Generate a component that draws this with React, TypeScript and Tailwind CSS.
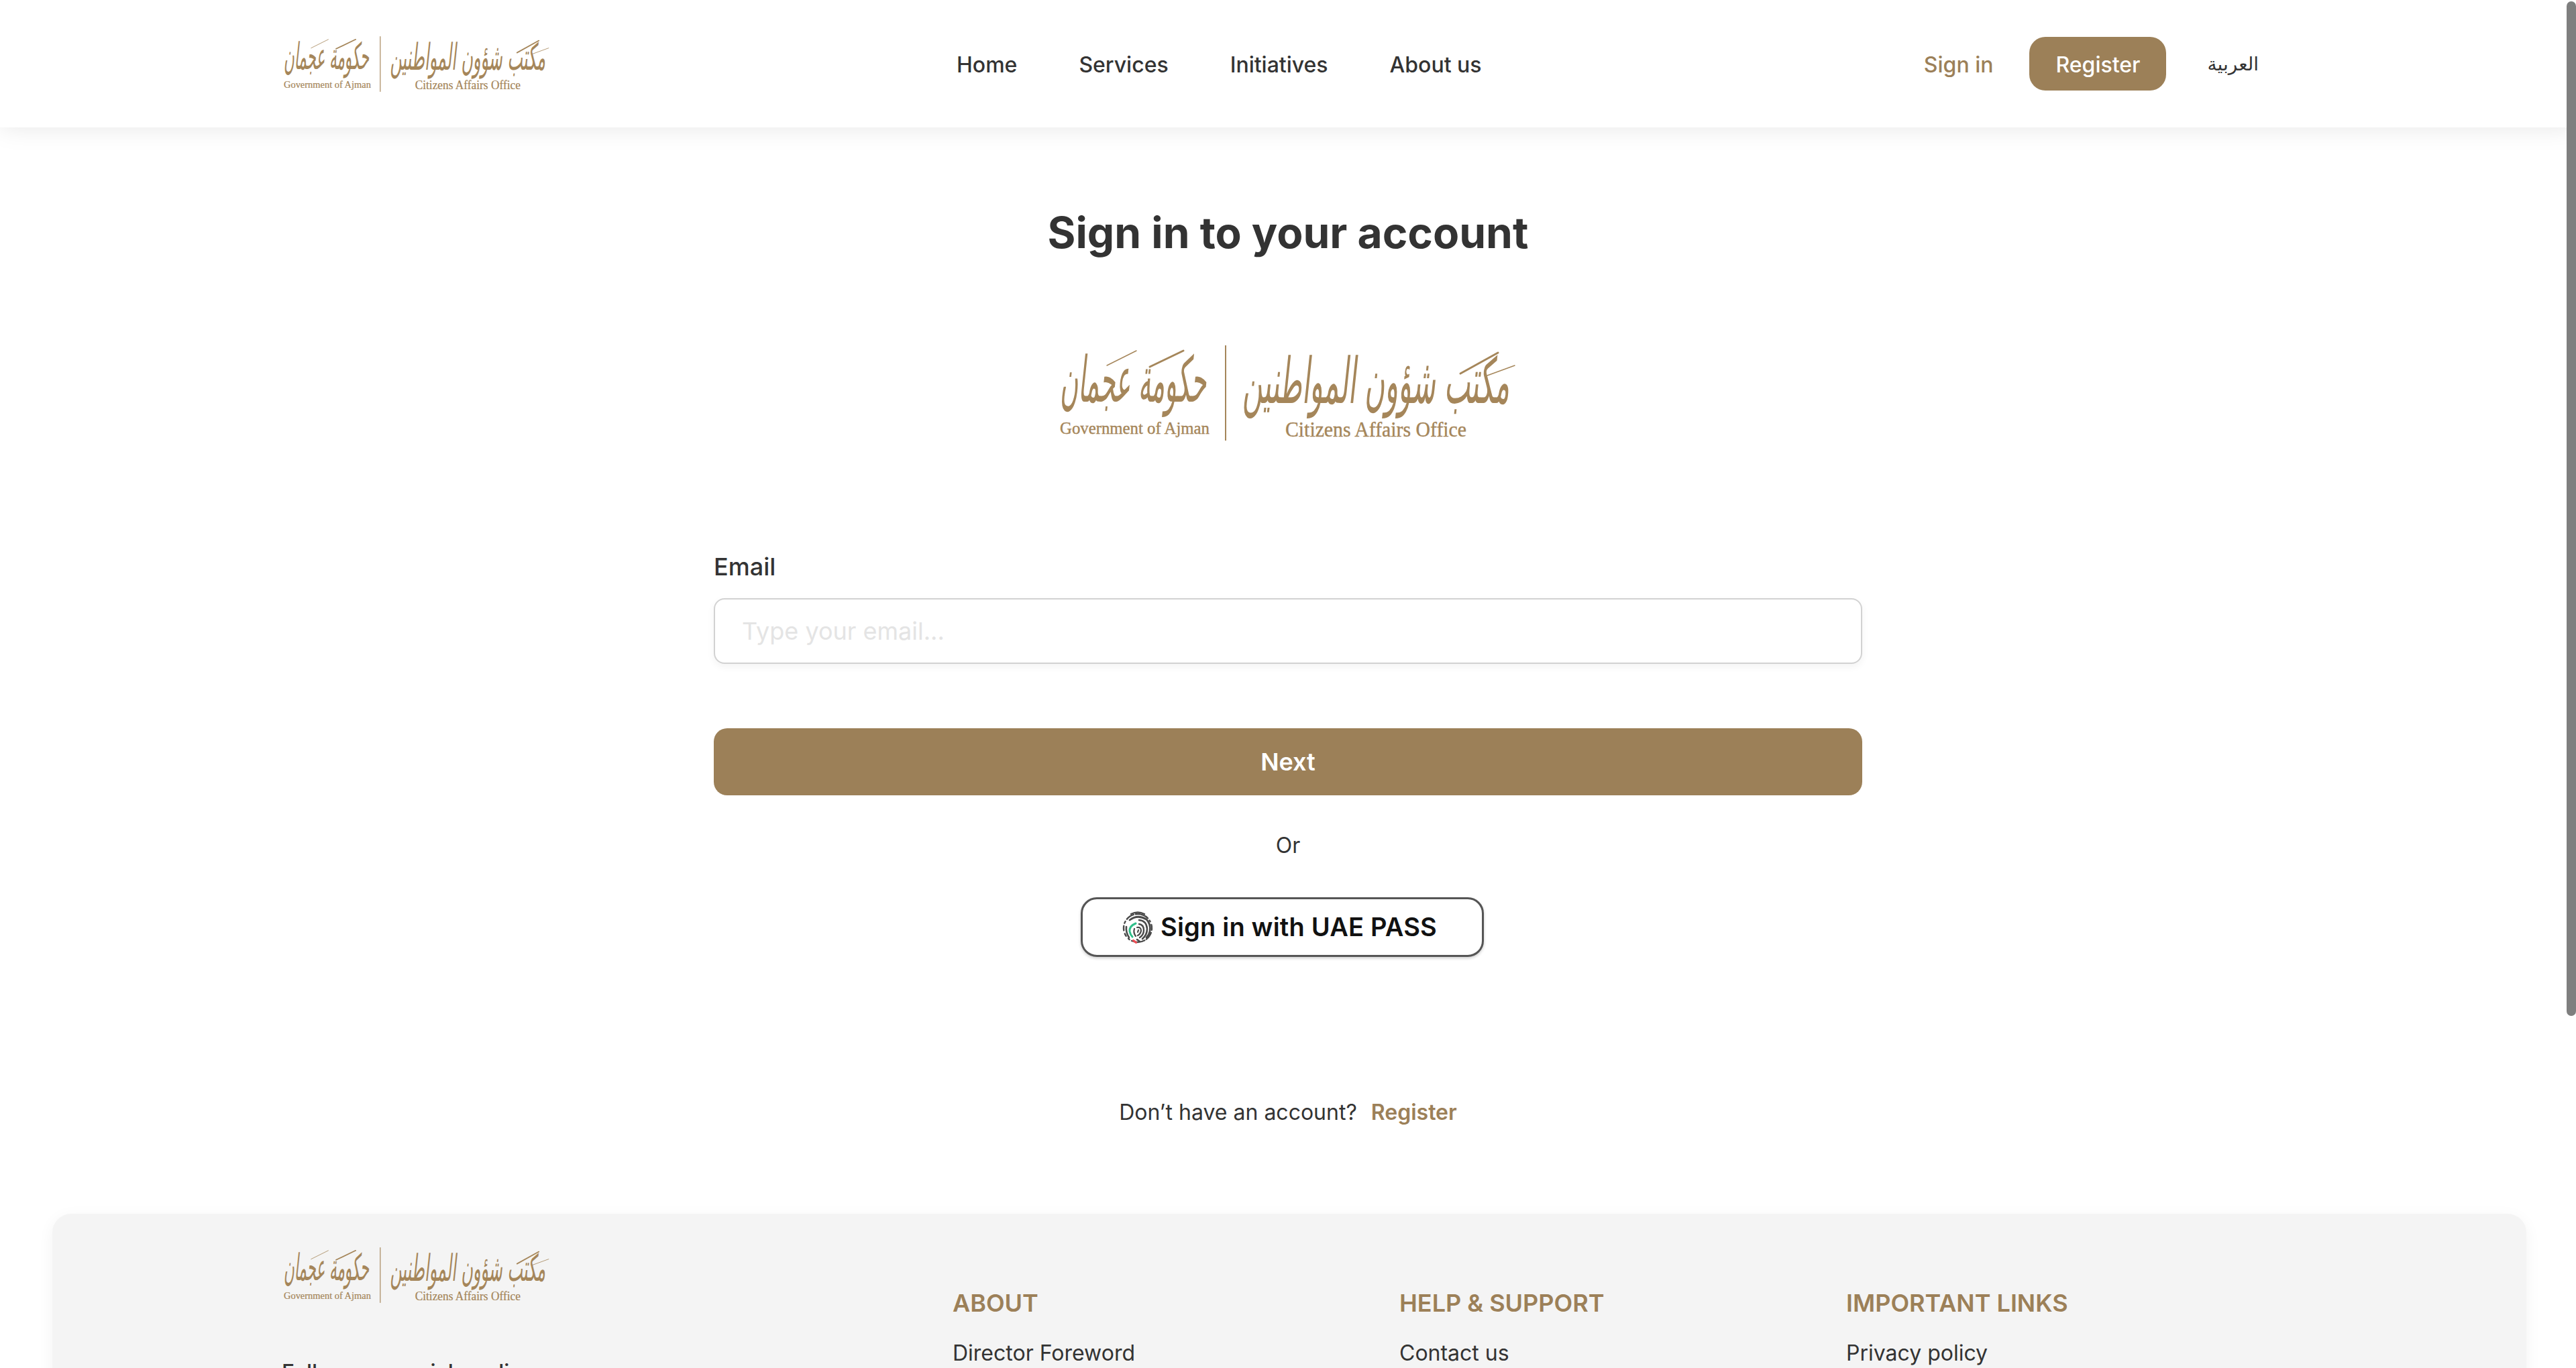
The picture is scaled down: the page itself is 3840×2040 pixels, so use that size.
import React from "react";

const GOLD = "#9c8058";

function Logo() {
  return (
    <svg viewBox="0 0 680 142" className="w-full h-full block overflow-visible" fill="#a5865a">
      <g style={{ fontFamily: "'DejaVu Sans', sans-serif" }}>
        <g transform="translate(0 84) skewX(-6) scale(1 1.35)">
          <text x="218" y="0" direction="rtl" fontSize="70" textLength="218" lengthAdjust="spacingAndGlyphs">
            حكومة عجمان
          </text>
        </g>
        <g transform="translate(0 86) skewX(-6) scale(1 1.35)">
          <text x="670" y="0" direction="rtl" fontSize="70" textLength="398" lengthAdjust="spacingAndGlyphs">
            مكتب شؤون المواطنين
          </text>
        </g>
      </g>
      {/* thin calligraphic flourishes */}
      <g stroke="#a5865a" strokeLinecap="round" fill="none">
        <path d="M114 8 L70 30" strokeWidth="1.4" />
        <path d="M184 8 L134 32" strokeWidth="3" />
        <path d="M653 11 L597 42" strokeWidth="3" />
        <path d="M678 30 L637 45" strokeWidth="1.4" />
      </g>
      <g style={{ fontFamily: "'Liberation Serif', serif" }} stroke="#a5865a" strokeWidth="0.4">
        <text x="0" y="132" fontSize="25" textLength="223" lengthAdjust="spacingAndGlyphs">
          Government of Ajman
        </text>
        <text x="336" y="136" fontSize="31" textLength="270" lengthAdjust="spacingAndGlyphs">
          Citizens Affairs Office
        </text>
      </g>
      <rect x="246" y="0" width="2" height="142" />
    </svg>
  );
}

function Fingerprint() {
  return (
    <svg viewBox="0 0 50 50" className="w-[50px] h-[50px] shrink-0" fill="none" strokeLinecap="round">
      <g stroke="#4a4a4a">
        <path d="M15 5 Q25 0 35 5" strokeWidth="2.4" />
        <circle cx="25" cy="26" r="21" strokeWidth="2.4" strokeDasharray="3 4 12 3 20 4 2 5 4 5 7 4" />
        <path d="M13 14 Q25 5 38 13 Q45 20 43 31 Q42 36 38 40" strokeWidth="2.8" />
        <path d="M27 14 Q38 15 39 27 Q39 36 32 42" strokeWidth="2.6" />
        <path d="M27 20 Q34 21 34 29 Q34 36 28 40" strokeWidth="2.4" />
        <path d="M24 25 Q30 24 30 30 Q29 35 25 37" strokeWidth="2.2" />
        <path d="M22 38 Q18 33 20 27 M25 32 L26 29" strokeWidth="2.2" />
        <path d="M8 24 Q7 32 12 40 M24 43 L28 46" strokeWidth="2.6" />
      </g>
      <path d="M22 19 Q12 23 13 31 Q14 36 17 39" stroke="#2fbf8a" strokeWidth="3" />
      <path d="M18.5 44.5 L22.5 47.5" stroke="#ec4d55" strokeWidth="3.2" />
    </svg>
  );
}

function FooterColumn({ title, link }: { title: string; link: string }) {
  return (
    <div className="w-[666px] shrink-0">
      <h3 className="text-[36px] leading-[44px] font-semibold text-[#9c8058]">{title}</h3>
      <a className="block mt-[31px] text-[32px] leading-[44px] text-[#333]">{link}</a>
    </div>
  );
}

export default function App() {
  return (
    <div className="relative h-[2040px] overflow-hidden bg-white text-[#333] font-['Inter','DejaVu_Sans',sans-serif]">
      {/* Header */}
      <header className="relative z-10 h-[190px] bg-white flex items-center pl-[423px] pr-[473px] shadow-[0_0_36px_rgba(0,0,0,0.1)]">
        <div className="w-[396px] h-[83px] shrink-0">
          <Logo />
        </div>
        <nav className="ml-[607px] mt-[3px] flex items-center gap-[92px] text-[32px] font-medium">
          <a>Home</a>
          <a>Services</a>
          <a>Initiatives</a>
          <a>About us</a>
        </nav>
        <div className="ml-auto flex items-center">
          <a className="mt-[3px] text-[32px] font-medium" style={{ color: GOLD }}>Sign in</a>
          <a className="ml-[54px] w-[204px] h-[80px] pt-[3px] rounded-[24px] bg-[#9c8058] text-white text-[32px] font-medium flex items-center justify-center">
            Register
          </a>
          <a className="ml-[61px] text-[28px]">العربية</a>
        </div>
      </header>

      {/* Sign in form */}
      <main className="flex flex-col items-center">
        <h1 className="mt-[117px] text-[64px] leading-[80px] font-bold">Sign in to your account</h1>
        <div className="mt-[128px] w-[680px] h-[142px]">
          <Logo />
        </div>
        <form className="mt-[166px] w-[1712px] flex flex-col">
          <label className="text-[36px] leading-[44px] font-medium">Email</label>
          <input
            type="email"
            placeholder="Type your email..."
            className="mt-[25px] h-[98px] rounded-[16px] border-2 border-[#d2d2d2] bg-white px-[40px] text-[36px] outline-none shadow-[0_4px_12px_rgba(0,0,0,0.05)] placeholder:text-[#e4e4e4]"
          />
          <button type="button" className="mt-[96px] h-[100px] rounded-[20px] bg-[#9c8058] text-white text-[36px] font-semibold">
            Next
          </button>
          <p className="mt-[55px] text-center text-[32px] leading-[40px]">Or</p>
          <button
            type="button"
            className="mt-[57px] ml-[547px] w-[601px] h-[89px] pl-[57px] rounded-[24px] border-[3px] border-[#555] bg-white shadow-[0_2px_4px_rgba(0,0,0,0.2)] flex items-center gap-[9px] text-[38px] font-semibold tracking-[0.2px] text-[#111]"
          >
            <Fingerprint />
            Sign in with UAE PASS
          </button>
        </form>
        <p className="mt-[212px] text-[32px] leading-[40px]">
          Don’t have an account?
          <a className="ml-[21px] font-semibold" style={{ color: GOLD }}>Register</a>
        </p>
      </main>

      {/* Footer */}
      <footer className="mt-[131px] ml-[78px] mr-[74px] h-[400px] rounded-[28px] bg-[#f4f4f4] shadow-[0_6px_24px_rgba(0,0,0,0.05)] pt-[50px] pl-[342px] flex">
        <div className="w-[1000px] shrink-0">
          <div className="ml-[3px] w-[396px] h-[83px]">
            <Logo />
          </div>
          <p className="mt-[82px] text-[32px] leading-[44px] font-medium">Follow our social media</p>
        </div>
        <div className="flex pt-[61px]">
          <FooterColumn title="ABOUT" link="Director Foreword" />
          <FooterColumn title="HELP & SUPPORT" link="Contact us" />
          <FooterColumn title="IMPORTANT LINKS" link="Privacy policy" />
        </div>
      </footer>

      {/* Scrollbar thumb */}
      <div className="absolute z-20 top-[2px] right-0 w-[14px] h-[1513px] rounded-full bg-[#7f7f7f]" />
    </div>
  );
}
